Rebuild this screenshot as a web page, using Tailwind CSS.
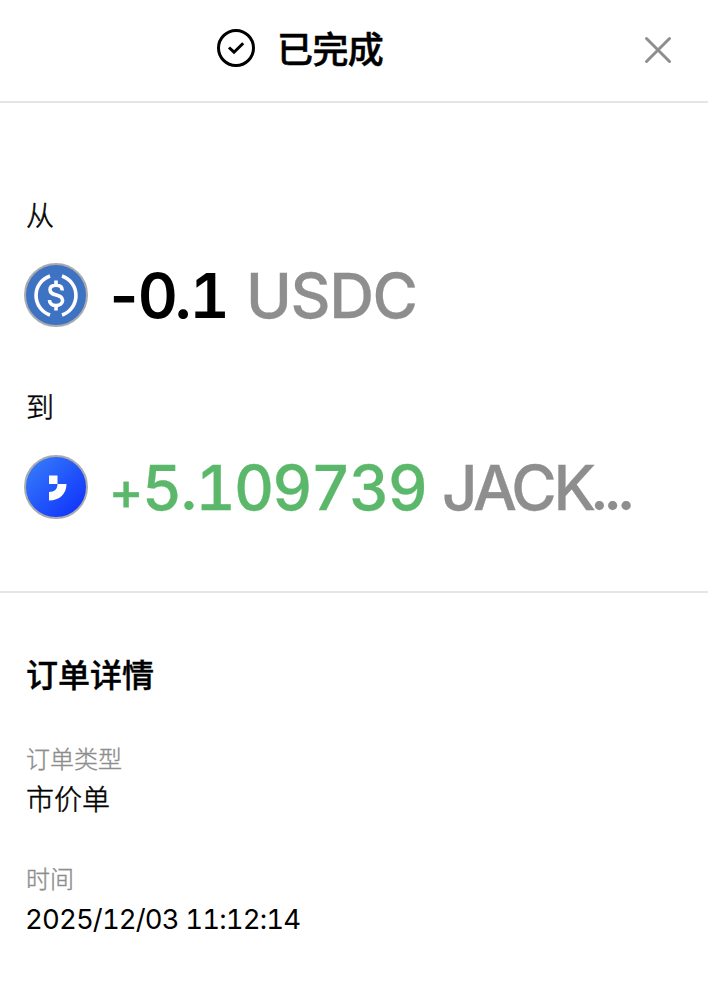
<!DOCTYPE html>
<html lang="zh-CN">
<head>
<meta charset="utf-8">
<title>订单详情</title>
<script src="https://cdn.jsdelivr.net/npm/@tailwindcss/browser@4"></script>
</head>
<body class="bg-white text-black font-['Inter','Noto_Sans_CJK_SC',sans-serif] overflow-hidden">
<main class="w-[708px] h-[984px] flex flex-col">
  <header class="h-[103px] shrink-0 border-b-2 border-[#e5e5e5] flex pl-[216px] pr-9">
    <svg class="mt-7 size-10 shrink-0" viewBox="0 0 40 40" fill="none" stroke="#000" stroke-width="3"><circle cx="20" cy="20" r="17.5"/><path d="M13 19.500l5 4.700 9.200-9"/></svg>
    <h1 class="ml-[21px] mt-6 text-[36px] leading-[52px] tracking-[-0.6px] font-medium whitespace-nowrap [-webkit-text-stroke:0.5px_#000]">已完成</h1>
    <svg class="ml-auto mt-[36px] size-7 shrink-0" viewBox="0 0 28 28" fill="none" stroke="#8e8e8e" stroke-width="3" stroke-linecap="round"><path d="M2.5 2.5l23 23M25.5 2.5l-23 23"/></svg>
  </header>
  <section class="h-[490px] shrink-0 border-b-2 border-[#e5e5e5] pt-[93px] px-6">
    <div class="pl-[2px] text-[28px] leading-10 font-light [-webkit-text-stroke:0.5px_#000]">从</div>
    <div class="mt-[27px] h-16 flex items-center">
      <svg class="size-16 shrink-0" viewBox="0 0 64 64" fill="none"><circle cx="32" cy="32" r="31" fill="#3e73c4" stroke="#a9abae" stroke-width="2"/><path d="M26 13a20.600 20.600 0 0 0 0 39M38 13a20.600 20.600 0 0 1 0 39" stroke="#fff" stroke-width="3.600"/><path d="M38.300 27.500c0-3.500-2.500-5.200-6.300-5.200s-6 1.700-6 4.500c0 7 12.600 3.500 12.600 10.500 0 3.300-2.800 5.200-6.600 5.200s-6.500-2-6.500-5.600M32 17.500v5M32 42.500v5" stroke="#fff" stroke-width="3.600"/></svg>
      <div class="ml-[16px] mt-[2px] flex text-[62px] leading-[72px] whitespace-nowrap"><span class="w-[142px] font-semibold tabular-nums tracking-[-6.5px]">-<span class="tracking-[-3px]">0<span class="tracking-[-2px]">.</span>1</span></span><span class="text-[#8e8e8e] font-medium tracking-[-1.4px] [-webkit-text-stroke:0.3px_#8e8e8e]">USDC</span></div>
    </div>
    <div class="mt-[61px] pl-[2px] text-[28px] leading-10 font-light [-webkit-text-stroke:0.5px_#000]">到</div>
    <div class="mt-[27px] h-16 flex items-center">
      <svg class="size-16 shrink-0" viewBox="0 0 64 64"><defs><linearGradient id="blue" x1="0" y1="0" x2="1" y2="1"><stop offset=".1" stop-color="#3579fa"/><stop offset=".85" stop-color="#1238fb"/></linearGradient></defs><circle cx="32" cy="32" r="31" fill="url(#blue)" stroke="#a9abae" stroke-width="2"/><path d="M25 20.500h8.500V29H25zM33.500 29H42.500c0 10-7 16.500-17.500 16.500V37c5.500 0 8.500-3 8.500-8z" fill="#fff"/></svg>
      <div class="ml-[21px] mt-[2px] flex text-[62px] leading-[72px] whitespace-nowrap"><span class="w-[333px] font-medium tabular-nums tracking-[-1.7px] text-[#5bb86b] [-webkit-text-stroke:0.3px_#5bb86b]"><span class="inline-block w-[33px] text-[53px] leading-none">+</span>5.109739</span><span class="text-[#8e8e8e] font-medium tracking-[-3.4px] [-webkit-text-stroke:0.3px_#8e8e8e]">JAC<span class="tracking-[-6px]">K</span><span class="tracking-[-5.5px]">...</span></span></div>
    </div>
  </section>
  <section class="pt-[59px] pl-[26px]">
    <h2 class="text-[32px] leading-[48px] font-medium [-webkit-text-stroke:0.4px_#000]">订单详情</h2>
    <div class="mt-[42px] text-[24px] leading-9 font-light text-[#8e8e8e] [-webkit-text-stroke:0.4px_#8e8e8e]">订单类型</div>
    <div class="text-[28px] leading-[44px] font-light [-webkit-text-stroke:0.5px_#000]">市价单</div>
    <div class="mt-10 text-[24px] leading-9 font-light text-[#8e8e8e] [-webkit-text-stroke:0.4px_#8e8e8e]">时间</div>
    <div class="-mt-px -ml-px text-[27.5px] leading-[44px] tabular-nums tracking-[-0.87px]">2025/12/03 11:12:14</div>
  </section>
</main>
</body>
</html>
